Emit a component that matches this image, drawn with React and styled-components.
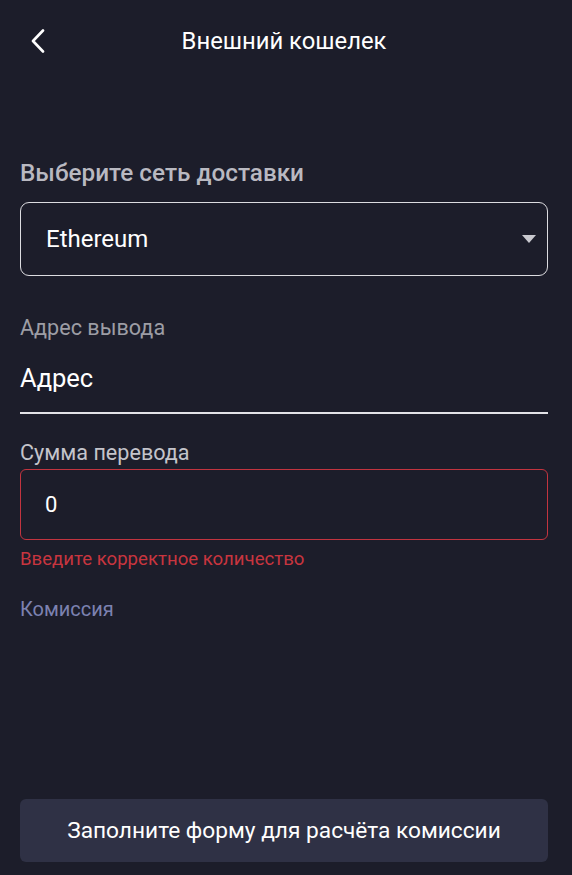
import React from "react";
import styled, { createGlobalStyle } from "styled-components";

const Global = createGlobalStyle`
  html, body { margin: 0; padding: 0; background: #1c1d2a; }
  body { font-family: Roboto, "Noto Sans", sans-serif; -webkit-font-smoothing: antialiased; }
  * { box-sizing: border-box; }
`;

const Page = styled.div`
  min-height: 875px;
  display: flex;
  flex-direction: column;
  background: #1c1d2a;
  color: #ffffff;
  padding: 0 24px 13px 20px;
`;

const Header = styled.header`
  height: 82px;
  display: flex;
  align-items: center;
  justify-content: center;
  position: relative;
`;

const BackButton = styled.button`
  position: absolute;
  left: 8px;
  top: 28px;
  width: 20px;
  height: 26px;
  padding: 0;
  border: none;
  background: none;
  display: flex;
  align-items: center;
  justify-content: center;
  cursor: pointer;
`;

const Title = styled.h1`
  margin: 0;
  font-size: 23.8px;
  font-weight: 400;
  color: #ffffff;
  line-height: 28px;
`;

const Section = styled.div`
  display: flex;
  flex-direction: column;
`;

const Heading = styled.h2`
  margin: 77px 0 15px;
  font-size: 24.3px;
  font-weight: 500;
  color: #b9b9c1;
  line-height: 28px;
`;

const SelectBox = styled.div`
  height: 74px;
  border: 1.5px solid #dcdce0;
  border-radius: 9px;
  display: flex;
  align-items: center;
  justify-content: space-between;
  padding: 0 0 0 25px;
  font-size: 24px;
  color: #ffffff;
`;

const Caret = styled.span`
  width: 0;
  height: 0;
  margin-right: 11px;
  border-left: 7px solid transparent;
  border-right: 7px solid transparent;
  border-top: 8px solid #c9c9cf;
`;

const Label = styled.div`
  font-size: 21.6px;
  line-height: 26px;
  color: ${(p) => p.$color || "#9d9da5"};
  margin-top: ${(p) => p.$mt || 0}px;
`;

const UnderlineField = styled.div`
  margin-top: 22px;
  padding-bottom: 19px;
  border-bottom: 2px solid #e2e2e6;
  font-size: 25.5px;
  line-height: 30px;
  color: #ffffff;
`;

const InputBox = styled.div`
  margin-top: 3px;
  height: 71px;
  border: 1.5px solid #c2343f;
  border-radius: 6px;
  display: flex;
  align-items: center;
  padding-left: 24px;
  font-size: 22px;
  color: #ffffff;
`;

const ErrorText = styled.div`
  margin-top: 8px;
  font-size: 18.6px;
  line-height: 22px;
  color: #c8353f;
`;

const FeeLink = styled.div`
  margin-top: 27px;
  font-size: 20px;
  line-height: 24px;
  color: #7c82b1;
`;

const SubmitButton = styled.button`
  margin-top: auto;
  height: 63px;
  width: 100%;
  border: none;
  border-radius: 6px;
  background: #2f3145;
  color: #ffffff;
  font-family: Roboto, "Noto Sans", sans-serif;
  font-size: 22.7px;
  cursor: pointer;
`;

export default function App() {
  return (
    <>
      <Global />
      <Page>
        <Header>
          <BackButton aria-label="Назад">
            <svg width="14" height="24" viewBox="0 0 14 24" fill="none">
              <path d="M12 1.5L2 12l10 10.5" stroke="#ffffff" strokeWidth="2.6" strokeLinecap="round" strokeLinejoin="round" />
            </svg>
          </BackButton>
          <Title>Внешний кошелек</Title>
        </Header>
        <Section>
          <Heading>Выберите сеть доставки</Heading>
          <SelectBox>
            Ethereum
            <Caret />
          </SelectBox>
          <Label $mt={39}>Адрес вывода</Label>
          <UnderlineField>Адрес</UnderlineField>
          <Label $mt={26} $color="#c4c4cb">Сумма перевода</Label>
          <InputBox>0</InputBox>
          <ErrorText>Введите корректное количество</ErrorText>
          <FeeLink>Комиссия</FeeLink>
        </Section>
        <SubmitButton>Заполните форму для расчёта комиссии</SubmitButton>
      </Page>
    </>
  );
}
